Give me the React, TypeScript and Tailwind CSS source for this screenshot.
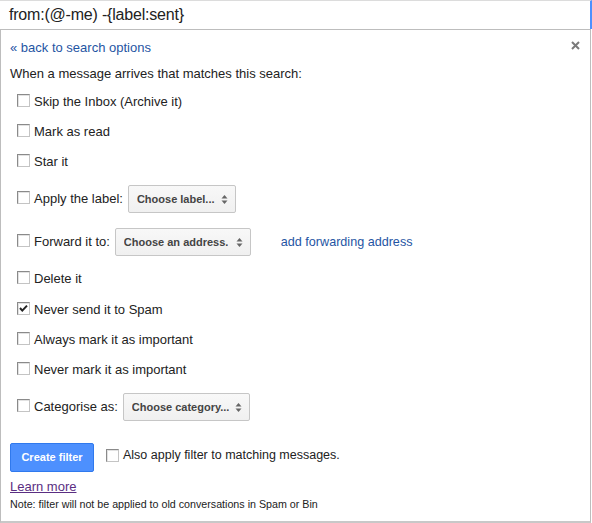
import React from 'react'

const font = { fontFamily: '"Liberation Sans", Arial, sans-serif' }

function Checkbox({ checked = false }: { checked?: boolean }) {
  return (
    <span className="relative inline-block w-[13px] h-[13px] shrink-0 border border-t-[#8a8a8a] border-l-[#8a8a8a] border-r-[#c4c4c4] border-b-[#c4c4c4] bg-white shadow-[inset_1px_1px_0_#e2e2e2] -mt-[3px]">
      {checked && (
        <svg viewBox="0 0 11 11" className="absolute left-0 top-0 w-[11px] h-[11px]">
          <path d="M2 5 L4.3 7.6 L9 2.6" fill="none" stroke="#222" strokeWidth="2" />
        </svg>
      )}
    </span>
  )
}

function Select({ label, width }: { label: string; width: number }) {
  return (
    <span
      className="inline-flex items-center justify-between h-[28px] pl-[8px] pr-[7px] border border-[#c6c6c6] rounded-[2px] bg-gradient-to-b from-[#f8f8f8] to-[#f0f0f0] text-[11px] font-bold text-[#444] overflow-hidden whitespace-nowrap"
      style={{ width }}
    >
      <span className="overflow-hidden">{label}</span>
      <svg viewBox="0 0 7 11" className="w-[7px] h-[11px] shrink-0 ml-[4px]">
        <path d="M0.5 4.5 L3.5 1 L6.5 4.5 Z" fill="#666" />
        <path d="M0.5 6.5 L3.5 10 L6.5 6.5 Z" fill="#666" />
      </svg>
    </span>
  )
}

function Row({ h, checked, children }: { h: number; checked?: boolean; children: React.ReactNode }) {
  return (
    <div className="flex items-center pl-[7px] text-[13px] text-[#222]" style={{ height: h }}>
      <Checkbox checked={checked} />
      <span className="ml-[4px] flex items-center">{children}</span>
    </div>
  )
}

export default function App() {
  return (
    <div className="w-[592px] h-[523px] bg-white overflow-hidden relative" style={font}>
      <div className="h-[29px] border-t border-[#dcdcdc] border-r-2 border-r-[#4d90fe] flex items-center pl-[9px] text-[16px] tracking-[-0.2px] text-[#222]">
        from:(@-me) -{'{'}label:sent{'}'}
      </div>
      <div className="relative w-[591px] h-[494px] border border-[#bdbdbd] border-b-2 border-b-[#c8c8c8] pl-[9px] pt-[10px]">
        <button className="absolute right-[10px] top-[11px] w-[9px] h-[9px]">
          <svg viewBox="0 0 9 9" className="w-[9px] h-[9px]">
            <path d="M1 1 L8 8 M8 1 L1 8" stroke="#7a7a7a" strokeWidth="2" />
          </svg>
        </button>
        <div className="h-[15px] flex items-center text-[13px] text-[#1f55a3]">« back to search options</div>
        <div className="h-[15px] mt-[11px] flex items-center text-[13px] text-[#222]">
          When a message arrives that matches this search:
        </div>
        <div className="mt-[5px]">
          <Row h={31}>Skip the Inbox (Archive it)</Row>
          <Row h={30}>Mark as read</Row>
          <Row h={30}>Star it</Row>
          <Row h={44}>
            Apply the label:
            <span className="ml-[5px] flex">
              <Select label="Choose label..." width={108} />
            </span>
          </Row>
          <Row h={42}>
            Forward it to:
            <span className="ml-[5px] flex">
              <Select label="Choose an address." width={136} />
            </span>
            <span className="ml-[30px] text-[12.6px] text-[#1f55a3]">add forwarding address</span>
          </Row>
          <Row h={32}>Delete it</Row>
          <Row h={29} checked>Never send it to Spam</Row>
          <Row h={31}>Always mark it as important</Row>
          <Row h={30}>Never mark it as important</Row>
          <Row h={44}>
            Categorise as:
            <span className="ml-[5px] flex">
              <Select label="Choose category..." width={127} />
            </span>
          </Row>
        </div>
        <div className="mt-[14px] flex items-start">
          <button className="w-[84px] h-[29px] rounded-[2px] bg-[#4d90fe] border border-[#3079ed] text-white text-[11px] font-bold">
            Create filter
          </button>
          <div className="ml-[12px] mt-[3px] flex items-center text-[12.5px] text-[#222]">
            <span className="mt-[3px] flex"><Checkbox /></span>
            <span className="ml-[4px]">Also apply filter to matching messages.</span>
          </div>
        </div>
        <div className="mt-[8px] h-[14px] flex items-center text-[13px] text-[#5a2e82] underline">Learn more</div>
        <div className="mt-[4px] h-[12px] flex items-center text-[10.7px] text-[#222]">
          Note: filter will not be applied to old conversations in Spam or Bin
        </div>
      </div>
    </div>
  )
}
